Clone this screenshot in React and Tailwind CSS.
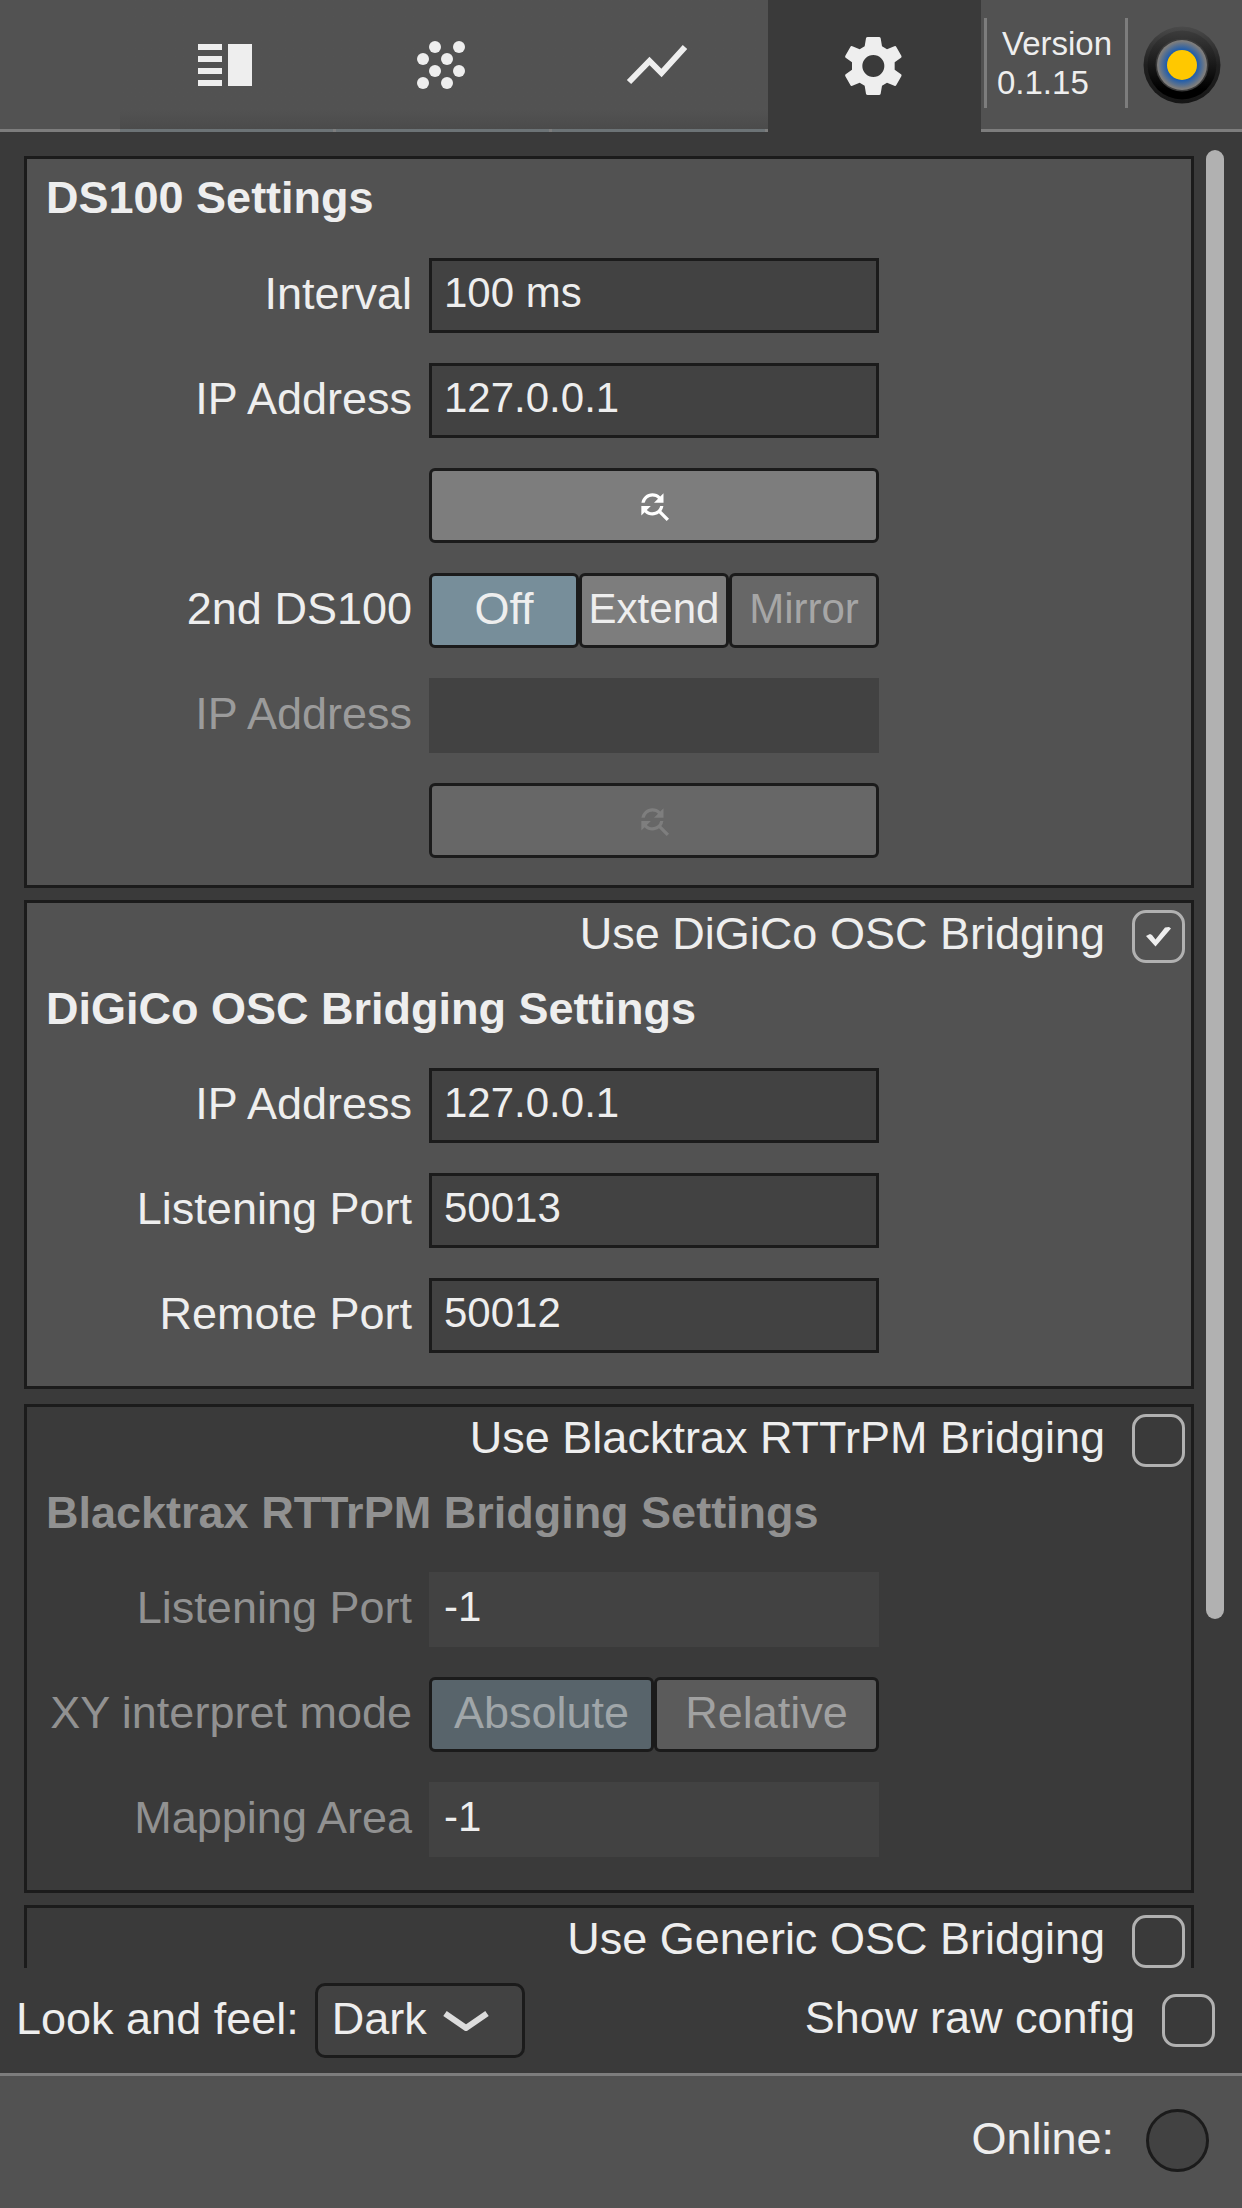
import { useId, useState } from "react";
import { MdFindReplace } from "react-icons/md";

const tabIcon = "h-[72px] w-[72px]";

function TableIcon() {
  return (
    <svg viewBox="0 0 72 72" className={tabIcon} fill="currentColor" aria-hidden="true">
      <path d="M9 15h24v6H9zM9 27h24v6H9zM9 39h24v6H9zM9 51h24v6H9zM39 15h24v42H39z" />
    </svg>
  );
}

const dots = [[30, 18], [54, 18], [18, 30], [42, 30], [30, 42], [54, 42], [18, 54], [42, 54]];

function DotsIcon() {
  return (
    <svg viewBox="0 0 72 72" className={tabIcon} fill="currentColor" aria-hidden="true">
      {dots.map(([x, y]) => (
        <circle key={`${x}-${y}`} cx={x} cy={y} r="6" />
      ))}
    </svg>
  );
}

function LineIcon() {
  return (
    <svg viewBox="0 0 72 72" className={tabIcon} fill="none" stroke="currentColor" strokeWidth="6" aria-hidden="true">
      <path d="M8 53 28.500 32 40.500 44 64 18" />
    </svg>
  );
}

function GearIcon() {
  return (
    <svg viewBox="5 15 216 216" className={tabIcon} fill="currentColor" stroke="none" aria-hidden="true">
      <path
        fillRule="evenodd"
        d="M97 36h34q4 0 5 4l4 24 15 9 22-9q4-2 6 2l15 26q2 4-1 6l-19 14v22l19 14q3 2 1 6l-15 26q-2 4-6 2l-22-9-15 9-4 24q-1 4-5 4H97q-4 0-5-4l-4-24-15-9-22 9q-4 2-6-2l-15-26q-2-4 1-6l19-14v-22L31 98q-3-2-1-6l15-26q2-4 6-2l22 9 15-9 4-24q1-4 5-4zM114 90a33 33 0 1 0 0 66a33 33 0 1 0 0-66z"
      />
    </svg>
  );
}

function Logo() {
  return (
    <svg viewBox="0 0 78 78" className="h-[78px] w-[78px]" aria-label="Logo" role="img">
      <defs>
        <linearGradient id="ring" x1="0" y1="0" x2="0" y2="1">
          <stop offset="0" stopColor="#3c3c3c" />
          <stop offset="0.85" stopColor="#000" />
        </linearGradient>
        <linearGradient id="rim" x1="0" y1="0" x2="0" y2="1">
          <stop offset="0" stopColor="#4a4a4a" />
          <stop offset="0.5" stopColor="#1f1f1f" />
          <stop offset="1" stopColor="#161616" />
        </linearGradient>
        <radialGradient id="glow">
          <stop offset="0.6" stopColor="#1c5cae" />
          <stop offset="0.95" stopColor="#7d7d7d" />
        </radialGradient>
      </defs>
      <circle cx="39" cy="39" r="38.500" fill="url(#rim)" />
      <circle cx="39" cy="39" r="34.500" fill="url(#ring)" />
      <circle cx="39" cy="39" r="26.500" fill="#3a3a3a" />
      <circle cx="39" cy="39" r="25" fill="url(#glow)" />
      <circle cx="39" cy="39" r="15" fill="#ffc800" />
    </svg>
  );
}

function Tab({ label, selected, onSelect, children }) {
  return (
    <button
      type="button"
      role="tab"
      aria-label={label}
      aria-selected={selected}
      onClick={onSelect}
      className={
        selected
          ? "flex w-[213px] items-center justify-center bg-[#3a3a3a] pr-[3px]"
          : "relative flex w-[216px] items-center justify-center border-b-[3px] border-[#6c7376] bg-linear-to-b from-[#525252] from-85% to-[#4b4b4b] pr-[6px] after:absolute after:right-0 after:-bottom-[3px] after:h-[3px] after:w-[3px] after:bg-[#7d7d7d]"
      }
    >
      {children}
    </button>
  );
}

function Checkbox({ label, defaultChecked = false }) {
  return (
    <label className="flex items-center gap-[27px]">
      <span className="pb-[6px]">{label}</span>
      <span className="relative flex">
        <input
          type="checkbox"
          defaultChecked={defaultChecked}
          className="peer h-[53px] w-[53px] appearance-none rounded-[14px] border-[3px] border-[#b1b1b1]"
        />
        <svg
          viewBox="0 0 53 53"
          className="pointer-events-none absolute inset-0 hidden peer-checked:block"
          fill="#eee"
          aria-hidden="true"
        >
          <path d="M14 26 18 24 20 25 23.500 29.500 33 17.500 37 17 39 18.500 23.500 36.500z" />
        </svg>
      </span>
    </label>
  );
}

function Panel({ title, toggle, enabled = true, className = "", children }) {
  return (
    <section
      className={`shrink-0 border-[3px] border-[#1b1b1b] ${enabled ? "bg-[#525252]" : "bg-[#3a3a3a]"} ${toggle ? "pb-[33px]" : "pb-[27px]"} ${className}`}
    >
      {toggle && <div className="flex h-16 items-center justify-end pt-[3px] pr-[6px]">{toggle}</div>}
      {title && (
        <h2 className={`flex items-center pl-[19px] font-bold ${toggle ? "h-[82px]" : "h-[77px]"} ${enabled ? "" : "text-[#919191]"}`}>
          {title}
        </h2>
      )}
      <div className={`flex flex-col gap-[30px] ${toggle ? "pt-[19px]" : "pt-[22px]"}`}>{children}</div>
    </section>
  );
}

const labelBox = "w-[385px] shrink-0 pb-1 text-right";

function Row({ label, muted, children }) {
  return (
    <div className="flex h-[75px] items-center gap-[17px]">
      <span className={`${labelBox} ${muted ? "text-[#919191]" : ""}`}>{label}</span>
      <div className="flex h-full w-[450px]">{children}</div>
    </div>
  );
}

function Field({ label, value, muted, labelColor = "text-[#9b9b9b]" }) {
  const id = useId();
  return (
    <div className="flex h-[75px] items-center gap-[17px]">
      <label htmlFor={id} className={`${labelBox} ${muted ? labelColor : ""}`}>
        {label}
      </label>
      <input
        id={id}
        type="text"
        defaultValue={value}
        readOnly={muted}
        className={`h-full w-[450px] border-[3px] bg-[#424242] px-3 pb-[6px] text-[42px] outline-none ${muted ? "border-[#424242]" : "border-[#1b1b1b]"}`}
      />
    </div>
  );
}

function FindButton({ disabled }) {
  return (
    <button
      type="button"
      aria-label="Find device"
      disabled={disabled}
      className={`flex w-full items-center justify-center rounded-md border-[3px] border-[#1b1b1b] ${disabled ? "bg-[#676767] text-[#7e7e7e]" : "bg-[#7d7d7d] text-white"}`}
    >
      <MdFindReplace className="h-[38px] w-[38px]" />
    </button>
  );
}

const segment = "flex-1 rounded-md border-[3px] border-[#1b1b1b] pb-1";

export default function App() {
  const [tab, setTab] = useState("settings");
  return (
    <div className="flex h-screen flex-col bg-[#3a3a3a] font-['Liberation_Sans',Arial,sans-serif] text-[45px] leading-none text-[#eee]">
      <header className="flex h-[132px] shrink-0">
        <div className="w-[120px] grow border-b-[3px] border-[#7d7d7d] bg-[#525252]" />
        <nav role="tablist" className="flex">
          <Tab label="Table" selected={tab === "table"} onSelect={() => setTab("table")}><TableIcon /></Tab>
          <Tab label="Positions" selected={tab === "positions"} onSelect={() => setTab("positions")}><DotsIcon /></Tab>
          <Tab label="Statistics" selected={tab === "statistics"} onSelect={() => setTab("statistics")}><LineIcon /></Tab>
          <Tab label="Settings" selected={tab === "settings"} onSelect={() => setTab("settings")}><GearIcon /></Tab>
        </nav>
        <div className="flex border-b-[3px] border-[#7d7d7d] bg-[#525252] py-[18px] pr-[21px] pl-[3px]">
          <div className="flex h-[90px] w-[144px] flex-col justify-center border-x-[3px] border-[#7d7d7d] pl-[10px] text-[33px] leading-[39px]">
            <span className="pl-[5px]">Version</span>
            <span>0.1.15</span>
          </div>
          <div className="flex items-center pl-[15px]"><Logo /></div>
        </div>
      </header>

      <main className="flex min-h-0 flex-1">
        <div className="flex min-w-0 flex-1 flex-col gap-3 overflow-y-auto pt-6 pl-6 [scrollbar-width:none]">
          <Panel title="DS100 Settings">
            <Field label="Interval" value="100 ms" />
            <Field label="IP Address" value="127.0.0.1" />
            <Row><FindButton /></Row>
            <Row label="2nd DS100">
              <div role="group" aria-label="2nd DS100" className="flex w-full">
                <button type="button" aria-pressed="true" className={`${segment} bg-[#778e9a]`}>Off</button>
                <button type="button" aria-pressed="false" className={`${segment} bg-[#7d7d7d] text-[42px]`}>Extend</button>
                <button type="button" disabled className={`${segment} bg-[#676767] text-[42px] text-[#a6a6a6]`}>Mirror</button>
              </div>
            </Row>
            <Field label="IP Address" value="" muted />
            <Row><FindButton disabled /></Row>
          </Panel>

          <Panel title="DiGiCo OSC Bridging Settings" toggle={<Checkbox label="Use DiGiCo OSC Bridging" defaultChecked />}>
            <Field label="IP Address" value="127.0.0.1" />
            <Field label="Listening Port" value="50013" />
            <Field label="Remote Port" value="50012" />
          </Panel>

          <Panel
            title="Blacktrax RTTrPM Bridging Settings"
            enabled={false}
            className="mt-[3px]"
            toggle={<Checkbox label="Use Blacktrax RTTrPM Bridging" />}
          >
            <Field label="Listening Port" value="-1" muted labelColor="text-[#919191]" />
            <Row label="XY interpret mode" muted>
              <div role="group" aria-label="XY interpret mode" className="flex w-full">
                <button type="button" disabled aria-pressed="true" className={`${segment} bg-[#58646b] text-[#a0a6a9]`}>Absolute</button>
                <button type="button" disabled aria-pressed="false" className={`${segment} bg-[#5b5b5b] text-[#a1a1a1]`}>Relative</button>
              </div>
            </Row>
            <Field label="Mapping Area" value="-1" muted labelColor="text-[#919191]" />
          </Panel>

          <Panel enabled={false} className="min-h-[489px]" toggle={<Checkbox label="Use Generic OSC Bridging" />} />
        </div>
        <div className="w-12 shrink-0 px-3">
          <div className="mt-[18px] h-4/5 w-[18px] rounded-full bg-[#b1b1b1]" />
        </div>
      </main>

      <div className="flex h-[105px] shrink-0 items-center justify-between pr-[27px] pl-4">
        <label className="flex items-center gap-4">
          <span className="pb-1">Look and feel:</span>
          <span className="relative flex">
            <select
              defaultValue="Dark"
              className="h-[75px] w-[210px] appearance-none rounded-[10px] border-[3px] border-[#1b1b1b] bg-[#424242] pb-1 pl-[14px] outline-none"
            >
              <option>Dark</option>
              <option>Light</option>
            </select>
            <svg viewBox="0 0 46 20" className="pointer-events-none absolute top-7 right-9 h-5 w-[46px]" fill="none" stroke="#dcdcdc" strokeWidth="6" aria-hidden="true">
              <path d="M2 2.500 23 17 44 2.500" />
            </svg>
          </span>
        </label>
        <Checkbox label="Show raw config" />
      </div>

      <footer className="flex h-[135px] shrink-0 items-center justify-end gap-8 border-t-[3px] border-[#7d7d7d] bg-[#525252] pr-[33px] pb-[3px]">
        <span className="pb-1">Online:</span>
        <span className="h-[63px] w-[63px] rounded-full border-[3px] border-[#1b1b1b] bg-[#424242]" />
      </footer>
    </div>
  );
}
